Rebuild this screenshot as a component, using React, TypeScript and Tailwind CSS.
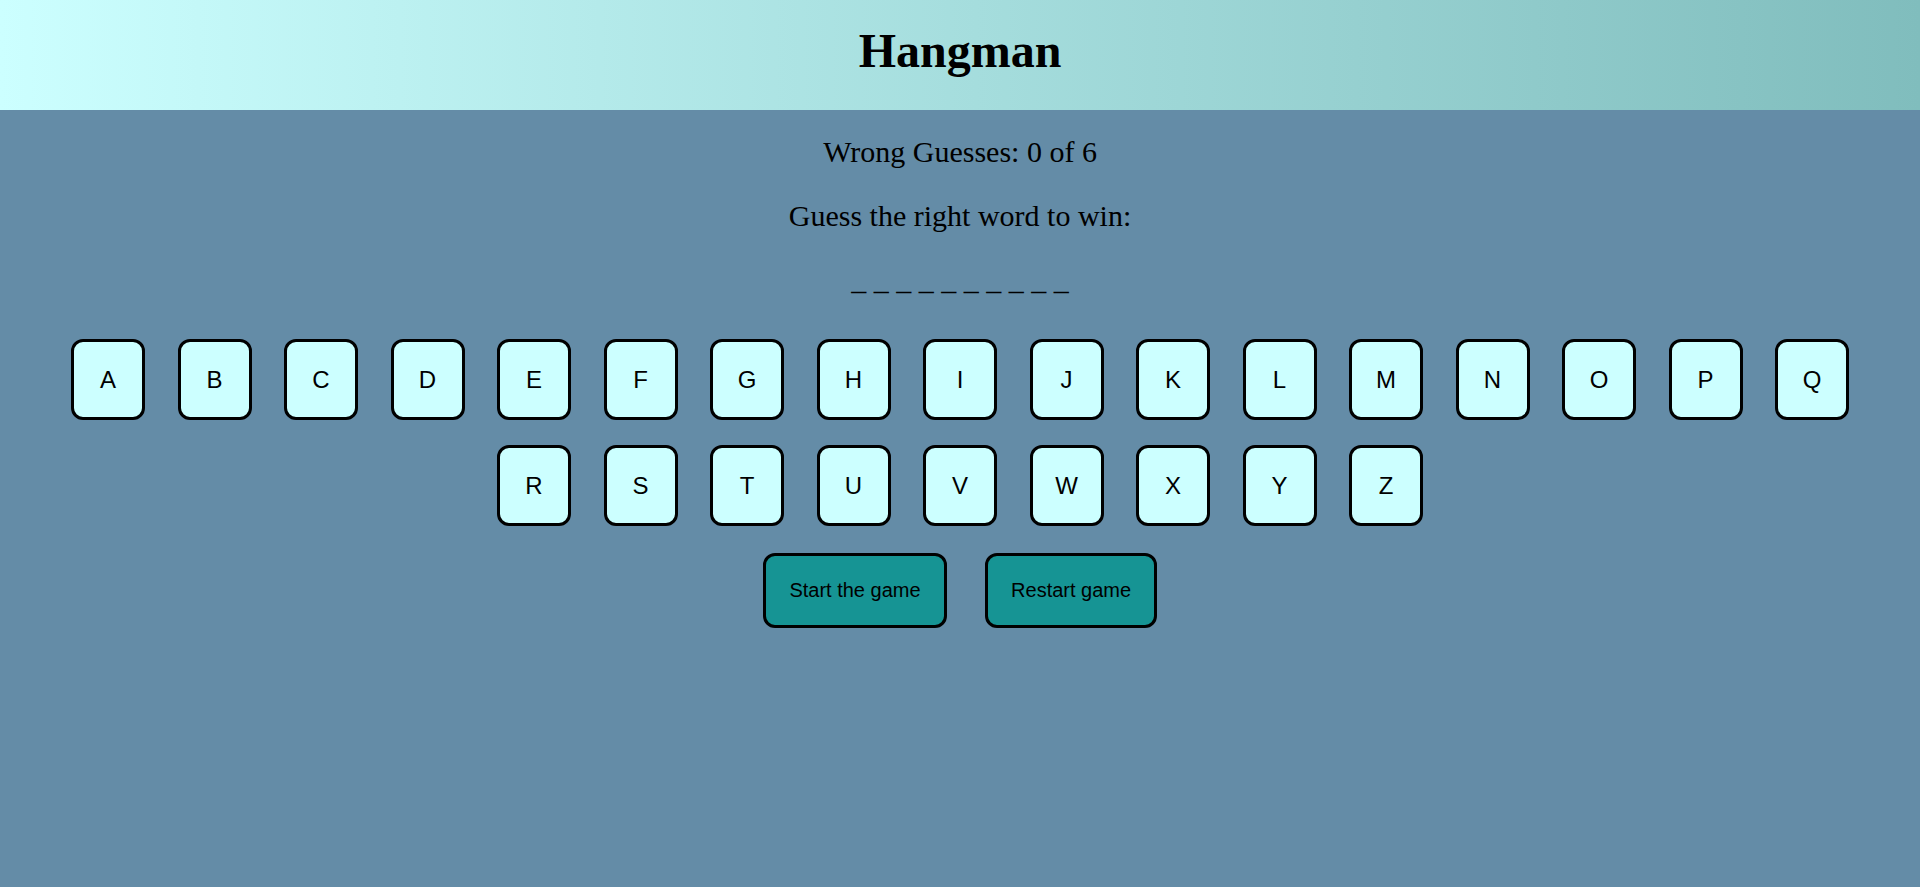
const letters = "ABCDEFGHIJKLMNOPQRSTUVWXYZ".split("");

export default function App() {
  const word = "__________";
  return (
    <div className="min-h-screen bg-[#648ca7] text-black">
      <header className="h-[110px] pt-[24px] bg-gradient-to-r from-[#ccffff] to-[#80bdbd] text-center">
        <h1 className="font-['Liberation_Serif',serif] font-bold text-[48px] leading-[53px]">
          Hangman
        </h1>
      </header>

      <main className="pt-[25px] flex flex-col items-center">
        <div className="font-['Liberation_Serif',serif] text-[30px] leading-[34px] text-center">
          <p>Wrong Guesses: 0 of 6</p>
          <p className="mt-[30px]">Guess the right word to win:</p>
          <p className="mt-[30px]">{word.split("").join(" ")}</p>
        </div>

        <div className="mt-[42px] w-[1810px] flex flex-wrap justify-center gap-x-[32.5px] gap-y-[25px]">
          {letters.map((l) => (
            <button
              key={l}
              className="w-[74px] h-[81px] bg-[#ccffff] border-[3px] border-black rounded-[12px] font-['Liberation_Sans',Arial,sans-serif] text-[24px] text-black"
            >
              {l}
            </button>
          ))}
        </div>

        <div className="mt-[27px] flex gap-[38px]">
          <button className="px-[23.5px] py-[23px] leading-[23px] bg-[#169494] border-[3px] border-black rounded-[12px] font-['Liberation_Sans',Arial,sans-serif] text-[20px]">
            Start the game
          </button>
          <button className="px-[23px] py-[23px] leading-[23px] bg-[#169494] border-[3px] border-black rounded-[12px] font-['Liberation_Sans',Arial,sans-serif] text-[20px]">
            Restart game
          </button>
        </div>
      </main>
    </div>
  );
}
